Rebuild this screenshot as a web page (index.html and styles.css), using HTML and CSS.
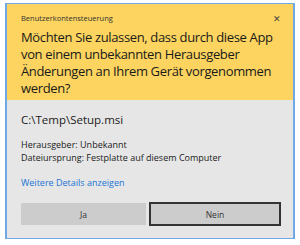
FILE: index.html
```html
<!DOCTYPE html>
<html>
<head>
    <meta charset="UTF-8" />
    <title>Benutzerkontensteuerung</title>
    <link rel="stylesheet" href="styles.css">
</head>

<body>
    <div class="uac-window">
        <div class="uac-header">
            <div class="uac-titlebar">
                <span class="uac-caption">Benutzerkontensteuerung</span>
                <span class="uac-close">&#x2715;</span>
            </div>
            <div class="uac-question">Möchten Sie zulassen, dass durch diese App von einem unbekannten Herausgeber Änderungen an Ihrem Gerät vorgenommen werden?</div>
        </div>

        <div class="uac-body">
            <div class="uac-file">C:\Temp\Setup.msi</div>
            <div class="uac-info">
                <div>Herausgeber: Unbekannt</div>
                <div>Dateiursprung: Festplatte auf diesem Computer</div>
            </div>
            <a class="uac-details" href="#">Weitere Details anzeigen</a>
            <div class="uac-buttons">
                <button class="uac-btn">Ja</button>
                <button class="uac-btn default">Nein</button>
            </div>
        </div>
    </div>
</body>
</html>
```

FILE: styles.css
```css
* {
    margin: 0;
    padding: 0;
    box-sizing: border-box;
}

body {
    font-family: "Open Sans", "Noto Sans", sans-serif;
    background: #fff;
    padding: 3px 0 0 5px;
    color: #1a1a1a;
}

.uac-window {
    width: 290px;
    height: 236px;
    border: 1px solid #6fa8e6;
    border-left-width: 2px;
    border-right-width: 2px;
    background-color: #e6e6e6;
    display: flex;
    flex-direction: column;
}

.uac-header {
    background-color: #fcd45f;
    height: 96px;
    padding: 6px 10px 0 14px;
}

.uac-titlebar {
    display: flex;
    justify-content: space-between;
    align-items: center;
    height: 16px;
    padding-right: 2px;
}

.uac-caption {
    font-size: 7.5px;
    color: #333;
}

.uac-close {
    font-size: 9px;
    color: #444;
}

.uac-question {
    margin-top: 3px;
    font-size: 13px;
    line-height: 17px;
    letter-spacing: -0.35px;
    color: #1a1a1a;
}

.uac-body {
    padding: 12px 12px 0 14px;
    display: flex;
    flex-direction: column;
}

.uac-file {
    font-size: 11.5px;
    line-height: 16px;
    margin-bottom: 10px;
}

.uac-info {
    font-size: 9px;
    line-height: 13px;
    margin-bottom: 12px;
}

.uac-details {
    font-size: 9px;
    line-height: 13px;
    color: #1a74d4;
    text-decoration: none;
    margin-bottom: 14px;
}

.uac-buttons {
    display: flex;
    gap: 3px;
}

.uac-btn {
    height: 22px;
    border: 2px solid #ccc;
    background-color: #cccccc;
    font-family: inherit;
    font-size: 8.5px;
    color: #333;
}

.uac-btn:first-child {
    width: 125px;
}

.uac-btn.default {
    flex: 1;
    border-color: #333;
    height: 24px;
    margin-top: -1px;
}
```
